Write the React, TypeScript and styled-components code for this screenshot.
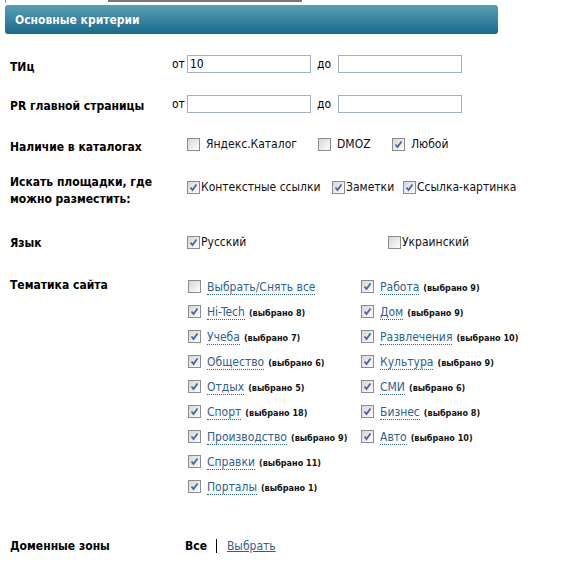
import React from 'react'
import styled, { createGlobalStyle } from 'styled-components'

const GlobalStyle = createGlobalStyle`
  body {
    margin: 0;
    background: #fff;
    font-family: "DejaVu Sans Condensed", "Liberation Sans", sans-serif;
    font-size: 12px;
    color: #000;
  }
`

const Page = styled.div`
  width: 562px;
  height: 567px;
  padding-left: 5px;
  box-sizing: border-box;
  overflow: hidden;
`

const TopStrip = styled.div`
  height: 5px;
  display: flex;
  align-items: flex-start;
`

const StripEdge = styled.div`
  width: 1px;
  height: 3px;
  background: #9a9a9a;
`

const StripBar = styled.div`
  margin-left: 102px;
  width: 194px;
  height: 2px;
  background: #777;
`

const Header = styled.div`
  width: 493px;
  height: 29px;
  border-radius: 3px;
  background: linear-gradient(to bottom, #5a9db5 0%, #3a86a2 50%, #17688a 100%);
  color: #fff;
  font-weight: bold;
  font-size: 12px;
  display: flex;
  align-items: center;
  padding-left: 10px;
  box-sizing: border-box;
  text-shadow: 0 0 1px rgba(0, 0, 0, 0.3);
`

const Form = styled.div`
  padding-top: 21px;
  padding-left: 5px;
`

const Row = styled.div<{ $h: number }>`
  display: grid;
  grid-template-columns: 162px 1fr;
  height: ${(p) => p.$h}px;
  align-items: start;
`

const Label = styled.div<{ $pt: number }>`
  font-weight: bold;
  font-size: 12px;
  line-height: 17px;
  padding-top: ${(p) => p.$pt}px;
`

const InputLine = styled.div`
  display: flex;
  align-items: center;
`

const Small = styled.span`
  font-size: 12px;
  color: #000;
  margin-right: 2px;
  width: 13px;
`

const Field = styled.input`
  width: 124px;
  height: 18px;
  box-sizing: border-box;
  border: 1px solid #9fb1c7;
  padding: 1px 2px;
  font-family: "DejaVu Sans Condensed", "Liberation Sans", sans-serif;
  font-size: 12px;
  color: #000;
  outline: none;
`

const ToLabel = styled.span`
  margin-left: 6px;
  margin-right: 6px;
  width: 15px;
`

const Options = styled.div<{ $pt?: number }>`
  display: flex;
  align-items: center;
  padding-left: 15px;
  padding-top: ${(p) => p.$pt ?? 0}px;
`

const Option = styled.label<{ $w?: number; $gap?: number }>`
  display: flex;
  align-items: center;
  gap: ${(p) => p.$gap ?? 1}px;
  width: ${(p) => (p.$w ? `${p.$w}px` : 'auto')};
  flex-shrink: 0;
  color: #111;
  white-space: nowrap;
`

const BoxWrap = styled.span`
  width: 13px;
  height: 13px;
  box-sizing: border-box;
  border: 1px solid #8c8c8c;
  background: linear-gradient(135deg, #d6d6d6 0%, #f2f2f2 70%, #ffffff 100%);
  display: flex;
  align-items: center;
  justify-content: center;
  flex-shrink: 0;
`

const Topics = styled.div`
  display: grid;
  grid-template-columns: 173px 1fr;
  padding-left: 16px;
  margin-top: -3px;
`

const TopicCol = styled.div`
  display: flex;
  flex-direction: column;
`

const TopicItem = styled.div`
  display: flex;
  align-items: center;
  height: 25px;
  gap: 6px;
  white-space: nowrap;
`

const TopicLink = styled.a`
  color: #2d6190;
  font-size: 12px;
  text-decoration: none;
  border-bottom: 1px dotted #2d6190;
  line-height: 14px;
`

const Count = styled.span`
  font-size: 9px;
  font-weight: bold;
  color: #111;
  margin-left: 4px;
`

const Zones = styled.div`
  display: flex;
  align-items: center;
  padding-left: 13px;
  padding-top: 1px;
`

const AllText = styled.span`
  font-weight: bold;
  font-size: 12px;
`

const Divider = styled.span`
  width: 1px;
  height: 14px;
  background: #000;
  margin: 0 10px 0 9px;
`

const PlainLink = styled.a`
  color: #2d6190;
  text-decoration: underline;
  font-size: 12px;
`

const Box = ({ checked }: { checked?: boolean }) => (
  <BoxWrap>
    {checked && (
      <svg width="9" height="9" viewBox="0 0 9 9">
        <path d="M1.5 4.5 L3.5 7 L7.5 1.5" fill="none" stroke="#4b62a5" strokeWidth="1.8" />
      </svg>
    )}
  </BoxWrap>
)

const leftTopics: [string, string | null, boolean][] = [
  ['Выбрать/Снять все', null, false],
  ['Hi-Tech', '(выбрано 8)', true],
  ['Учеба', '(выбрано 7)', true],
  ['Общество', '(выбрано 6)', true],
  ['Отдых', '(выбрано 5)', true],
  ['Спорт', '(выбрано 18)', true],
  ['Производство', '(выбрано 9)', true],
  ['Справки', '(выбрано 11)', true],
  ['Порталы', '(выбрано 1)', true],
]

const rightTopics: [string, string][] = [
  ['Работа', '(выбрано 9)'],
  ['Дом', '(выбрано 9)'],
  ['Развлечения', '(выбрано 10)'],
  ['Культура', '(выбрано 9)'],
  ['СМИ', '(выбрано 6)'],
  ['Бизнес', '(выбрано 8)'],
  ['Авто', '(выбрано 10)'],
]

export default function App() {
  return (
    <Page>
      <GlobalStyle />
      <TopStrip>
        <StripEdge />
        <StripBar />
      </TopStrip>
      <Header>Основные критерии</Header>
      <Form>
        <Row $h={40}>
          <Label $pt={4}>ТИц</Label>
          <InputLine>
            <Small>от</Small>
            <Field defaultValue="10" />
            <ToLabel>до</ToLabel>
            <Field />
          </InputLine>
        </Row>
        <Row $h={42}>
          <Label $pt={3}>PR главной страницы</Label>
          <InputLine>
            <Small>от</Small>
            <Field />
            <ToLabel>до</ToLabel>
            <Field />
          </InputLine>
        </Row>
        <Row $h={37}>
          <Label $pt={2}>Наличие в каталогах</Label>
          <Options>
            <Option $w={131} $gap={6}>
              <Box /> Яндекс.Каталог
            </Option>
            <Option $w={74} $gap={6}>
              <Box /> DMOZ
            </Option>
            <Option $gap={6}>
              <Box checked /> Любой
            </Option>
          </Options>
        </Row>
        <Row $h={61}>
          <Label $pt={0}>
            Искать площадки, где
            <br />
            можно разместить:
          </Label>
          <Options $pt={6}>
            <Option $w={145}>
              <Box checked />
              Контекстные ссылки
            </Option>
            <Option $w={71}>
              <Box checked />
              Заметки
            </Option>
            <Option>
              <Box checked />
              Ссылка-картинка
            </Option>
          </Options>
        </Row>
        <Row $h={42}>
          <Label $pt={0}>Язык</Label>
          <Options>
            <Option $w={201}>
              <Box checked />
              Русский
            </Option>
            <Option>
              <Box />
              Украинский
            </Option>
          </Options>
        </Row>
        <Row $h={261}>
          <Label $pt={0}>Тематика сайта</Label>
          <Topics>
            <TopicCol>
              {leftTopics.map(([name, count, checked]) => (
                <TopicItem key={name}>
                  <Box checked={checked} />
                  <span>
                    <TopicLink href="#">{name}</TopicLink>
                    {count && <Count>{count}</Count>}
                  </span>
                </TopicItem>
              ))}
            </TopicCol>
            <TopicCol>
              {rightTopics.map(([name, count]) => (
                <TopicItem key={name}>
                  <Box checked />
                  <span>
                    <TopicLink href="#">{name}</TopicLink>
                    <Count>{count}</Count>
                  </span>
                </TopicItem>
              ))}
            </TopicCol>
          </Topics>
        </Row>
        <Row $h={20}>
          <Label $pt={0}>Доменные зоны</Label>
          <Zones>
            <AllText>Все</AllText>
            <Divider />
            <PlainLink href="#">Выбрать</PlainLink>
          </Zones>
        </Row>
      </Form>
    </Page>
  )
}
